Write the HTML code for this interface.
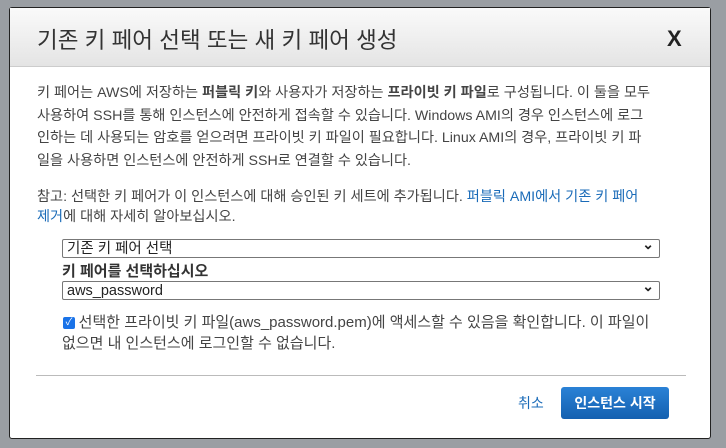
<!DOCTYPE html>
<html><head><meta charset="utf-8"><style>
body{margin:0;width:726px;height:448px;background:#9a9ea3;position:relative;overflow:hidden;font-family:"Liberation Sans","Noto Sans CJK KR",sans-serif;}
.m{position:absolute;left:9px;top:7px;width:700px;height:430px;background:#fff;border:1px solid #222;border-radius:3px;}
.h{height:58px;background:linear-gradient(#fafafa,#e4e4e4);border-bottom:1px solid #ccc;position:relative;}
.h .t{position:absolute;left:27px;top:15px;font-size:22.5px;color:#333;}
.h .x{position:absolute;left:657px;top:18px;font-size:22px;color:#222;font-weight:bold;}
p{margin:0;position:absolute;left:27px;width:680px;font-size:14.2px;color:#444;line-height:22.5px;white-space:nowrap}
a{color:#1a6bb8;text-decoration:none}
.s{position:absolute;left:52px;width:592px;height:17px;border:1px solid #777;border-radius:2px;font-size:14.5px;color:#222;line-height:19px;padding-left:4px;box-sizing:content-box}
.s:after{content:"⌄";position:absolute;right:5px;top:-5px;font-size:14px;font-weight:bold}
.lab{position:absolute;left:52px;top:252px;font-size:15px;font-weight:bold;color:#333}
.cb{position:absolute;left:53px;top:309px;width:12px;height:12px;background:#1a73e8;border-radius:2px;color:#fff;font-size:10px;line-height:12px;text-align:center}
.hr{position:absolute;left:26px;top:367px;width:650px;border-top:1px solid #bbb}
.btn{position:absolute;left:551px;top:379px;width:108px;height:32px;background:linear-gradient(#2a82d6,#1460b0);border-radius:3px;color:#fff;font-weight:bold;font-size:14px;text-align:center;line-height:32px}
.c{position:absolute;left:508px;top:385px;font-size:14px;color:#1a6bb8}
</style></head><body>
<div class="m">
<div class="h"><div class="t">기존 키 페어 선택 또는 새 키 페어 생성</div><div class="x">X</div></div>
<p style="top:74px">키 페어는 AWS에 저장하는 <b>퍼블릭 키</b>와 사용자가 저장하는 <b>프라이빗 키 파일</b>로 구성됩니다. 이 둘을 모두<br>사용하여 SSH를 통해 인스턴스에 안전하게 접속할 수 있습니다. Windows AMI의 경우 인스턴스에 로그<br>인하는 데 사용되는 암호를 얻으려면 프라이빗 키 파일이 필요합니다. Linux AMI의 경우, 프라이빗 키 파<br>일을 사용하면 인스턴스에 안전하게 SSH로 연결할 수 있습니다.</p>
<p style="top:179px;line-height:20px">참고: 선택한 키 페어가 이 인스턴스에 대해 승인된 키 세트에 추가됩니다. <a>퍼블릭 AMI에서 기존 키 페어<br>제거</a>에 대해 자세히 알아보십시오.</p>
<div class="s" style="top:231px">기존 키 페어 선택</div>
<div class="lab">키 페어를 선택하십시오</div>
<div class="s" style="top:273px">aws_password</div>
<div class="cb">✓</div>
<p style="left:52px;top:304px;width:600px;line-height:21px;color:#444;font-size:15px">&nbsp;&nbsp;&nbsp;&nbsp;선택한 프라이빗 키 파일(aws_password.pem)에 액세스할 수 있음을 확인합니다. 이 파일이<br>없으면 내 인스턴스에 로그인할 수 없습니다.</p>
<div class="hr"></div>
<div class="c">취소</div>
<div class="btn">인스턴스 시작</div>
</div>
</body></html>
